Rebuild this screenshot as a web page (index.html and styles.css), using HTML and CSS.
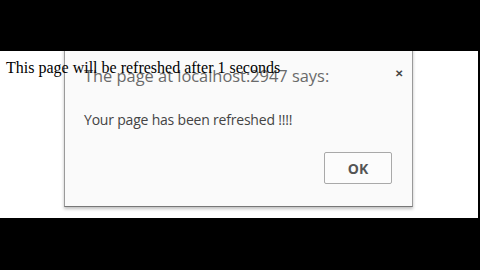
FILE: index.html
```html
<!DOCTYPE html>
<html lang="en">
<head>
  <meta charset="UTF-8">
  <title>Refresh page</title>
  <link rel="stylesheet" href="styles.css">
</head>
<body>

  <!-- Pagina que se atualiza -->
  <div class="screen">
    <p class="page-text">This page will be refreshed after 1 seconds</p>

    <!-- Caixa de alerta do navegador -->
    <div class="alert-box">
      <div class="alert-head">
        <span class="alert-title">The page at localhost:2947 says:</span>
        <span class="alert-close">&#x2715;</span>
      </div>
      <div class="alert-msg">Your page has been refreshed !!!!</div>
      <div class="alert-foot">
        <button class="ok-btn">OK</button>
      </div>
    </div>
  </div>

</body>
</html>
```

FILE: styles.css
```css
body {
  margin: 0;
  padding: 0;
  background: #000;
  height: 270px;
  overflow: hidden;
}

.screen {
  margin-top: 51px;
  width: 478px;
  height: 167px;
  background: #fff;
  position: relative;
  overflow: hidden;
}

.page-text {
  margin: 0;
  padding: 8px 0 0 6px;
  font-family: "Liberation Serif", "Times New Roman", serif;
  font-size: 16px;
  color: #000;
  position: relative;
  z-index: 2;
}

.alert-box {
  position: absolute;
  left: 64px;
  top: -10px;
  width: 347px;
  height: 164px;
  background: #fafafa;
  border: 1px solid #9a9a9a;
  border-bottom-color: #777;
  box-shadow: 0 2px 3px rgba(0, 0, 0, 0.25);
  font-family: "Open Sans", "Noto Sans", sans-serif;
  display: flex;
  flex-direction: column;
  z-index: 1;
}

.alert-head {
  display: flex;
  justify-content: space-between;
  align-items: flex-start;
  padding: 23px 9px 0 19px;
}

.alert-title {
  font-size: 16.4px;
  color: #6a6a6a;
  line-height: 21px;
}

.alert-close {
  font-size: 10px;
  font-weight: bold;
  color: #444;
  line-height: 12px;
  margin-top: 2px;
}

.alert-msg {
  margin-top: 24px;
  padding-left: 19px;
  font-size: 14px;
  letter-spacing: -0.2px;
  line-height: 19px;
  color: #444;
}

.alert-foot {
  display: flex;
  justify-content: flex-end;
  padding: 23px 20px 0 0;
}

.ok-btn {
  width: 68px;
  height: 32px;
  background: #fcfcfc;
  border: 1px solid #a9a9a9;
  border-radius: 2px;
  font-family: "Open Sans", "Noto Sans", sans-serif;
  font-size: 14px;
  font-weight: bold;
  color: #555;
  padding: 0;
}
```
